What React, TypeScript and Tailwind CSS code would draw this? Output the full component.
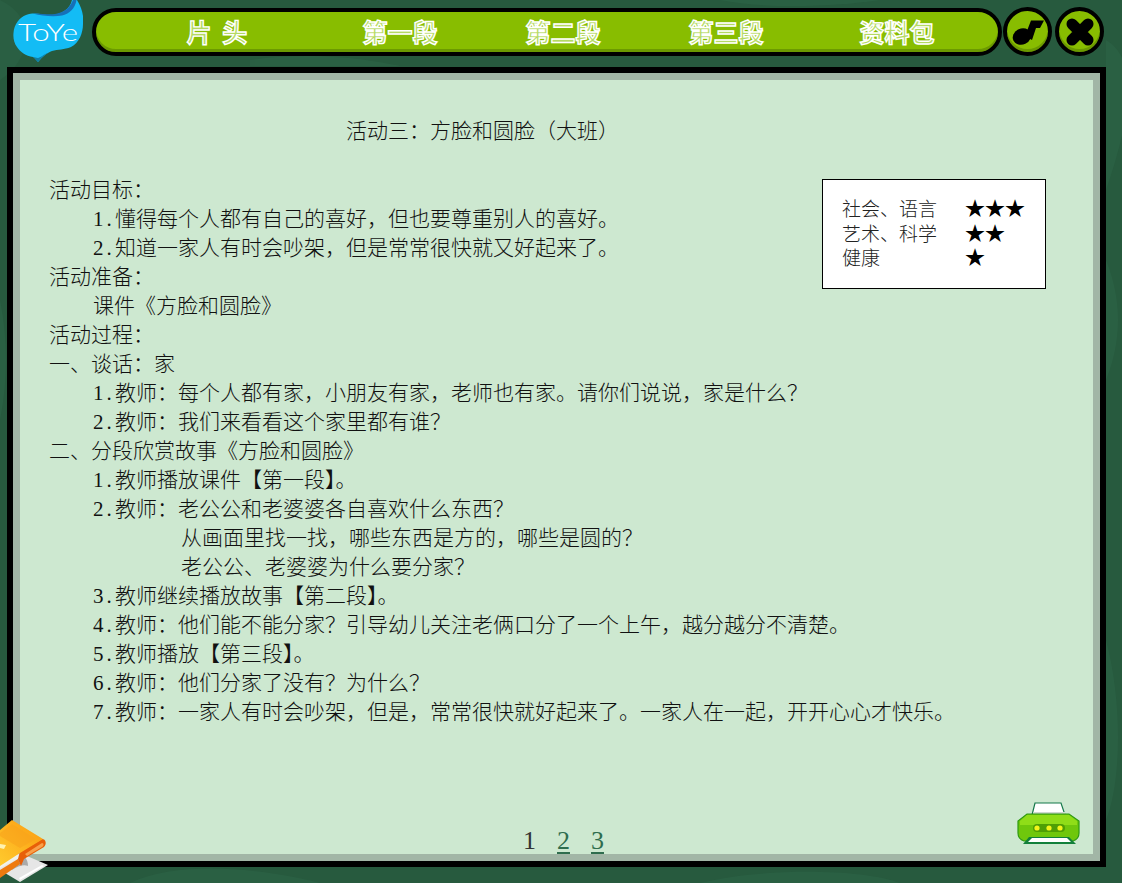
import React from "react";

const FONT = "[font-family:'Liberation_Serif','Noto_Sans_CJK_SC',serif]";

function Line({ n, indent = 0, children }: { n?: string; indent?: 0 | 1 | 2; children: React.ReactNode }) {
  const pad = indent === 0 ? "pl-0" : indent === 1 ? "pl-[44px]" : "pl-[132px]";
  return (
    <div className={`h-[29px] leading-[29px] whitespace-nowrap ${pad}`}>
      {n && <span className="inline-block w-[22px] tracking-[3px]">{n}</span>}
      {children}
    </div>
  );
}

function Logo() {
  return (
    <svg width="70" height="63" viewBox="13 0 70 63" className="shrink-0">
      <path d="M13.5 33 C14 24 20 17 26 15 C36 11 44 16 52 15 C62 14 70 9 72 0 L77 0 C82 8 84 16 83 24 C83 33 79 43 71 47 C64 50 58 49 52 51 C47 53 43 56 38 62 C36 60 35 58 33 57 C26 56 20 52 17 47 C14 43 13 38 13.5 33 Z" fill="#13bcf5" />
      <path d="M33 13.5 C40 13 48 15 55 14 C64 12.5 70 8 73 0 L76.5 0 C75 9 69 14 62 15.5 C54 17 42 16 33 13.5 Z" fill="#1670b8" />
      <path d="M33 57 C35 58 36 60 38 62 C41 58 44 55 48 53 C44 54 40 58 38 58 C36 58 35 57 33 57 Z" fill="#0e7fa8" />
      <text x="18" y="41" fill="#ffffff" fontSize="23" fontFamily="'Lato', sans-serif" fontWeight="300" textLength="60" lengthAdjust="spacingAndGlyphs">ToYe</text>
    </svg>
  );
}

function RoundButton({ children }: { children: React.ReactNode }) {
  return (
    <div className="flex h-[49px] w-[49px] shrink-0 items-center justify-center rounded-full border-[4px] border-black bg-[#88bd00] shadow-[inset_0_-3px_0_#6c9a00]">
      {children}
    </div>
  );
}

function NavItem({ label, className }: { label: string; className: string }) {
  return (
    <div className={`mb-[2px] w-40 text-center whitespace-pre font-bold text-[25px] leading-[40px] text-[#b4d962] [-webkit-text-stroke:1.4px_#ffffff] ${className}`}>
      {label}
    </div>
  );
}

function Book() {
  return (
    <svg width="50" height="65" viewBox="0 0 50 65" className="absolute left-0 top-[818px]">
      <defs>
        <linearGradient id="bk" x1="1" y1="0" x2="0" y2="1">
          <stop offset="0" stopColor="#fb9a10" />
          <stop offset="1" stopColor="#ffcb2e" />
        </linearGradient>
      </defs>
      <polygon points="20,35 48,47 20,64 0,52 0,45" fill="#e6e6e6" />
      <polygon points="19,60 42,47 44,48 20,62" fill="#ffffff" />
      <path d="M19 34 C25 38 28 42 28 48 C24 46 18 48 12 52 L10 50 C15 44 20 42 19 34 Z" fill="#a9a9a9" />
      <polygon points="0,38 15,31 19,40 0,50" fill="#f1f1ea" />
      <polygon points="0,41 6,39 6,41 0,43" fill="#e0702a" />
      <polygon points="0,52 18,41 20,46 0,60" fill="#ee7a10" />
      <path d="M20 34 L42 21 C46 21 47 26 44 29 L24 41 L21 48 L18 41 Z" fill="#e85f08" />
      <path d="M25 36 L42 25 C44 25 44 28 42 29 L27 38 Z" fill="#f9a04a" />
      <polygon points="0,12 12,2 43,21 20,35 0,48" fill="url(#bk)" />
      <polygon points="0,15 12,6 36,21 20,30 0,18" fill="#f7a21c" opacity="0.55" />
      <polygon points="0,26 6,27 4,31 0,30" fill="#fff2b0" />
    </svg>
  );
}

function Printer() {
  return (
    <svg width="64" height="44" viewBox="0 0 64 44" className="absolute bottom-[9px] right-[12px]">
      <path d="M10 14 L13 2 H39 L43 14 Z" fill="#ffffff" stroke="#15784a" strokeWidth="1.2" transform="translate(5 0)" />
      <rect x="16" y="11" width="32" height="3" fill="#cfd8cf" />
      <path d="M10 13 H52 L62 20 V32 Q62 38 56 40 H7 Q1 38 1 32 V20 Z" fill="#6fc70c" stroke="#2e9a12" strokeWidth="1.2" />
      <path d="M10 14 H52 L60 20 V24 H3 V20 Z" fill="#8fdd18" />
      <rect x="16" y="23" width="32" height="8" rx="4" fill="#4e9f05" />
      <circle cx="20" cy="27" r="2.6" fill="#f4f41a" />
      <circle cx="32" cy="27" r="2.6" fill="#f4f41a" />
      <circle cx="43" cy="27" r="2.6" fill="#f4f41a" />
      <polygon points="12,36 52,36 59,43 6,43" fill="#12803a" />
      <polygon points="15,37 50,37 54,41 11,41" fill="#ffffff" />
    </svg>
  );
}

function Background() {
  return (
    <svg width="1122" height="883" viewBox="0 0 1122 883" className="absolute inset-0">
      <g fill="#2c6246" opacity="0.7">
        <path d="M0 0 C40 20 30 60 0 80 Z" />
        <path d="M250 60 C320 50 380 62 400 66 L250 66 Z" />
        <path d="M1106 40 C1140 60 1130 120 1106 190 Z" />
        <path d="M1106 260 C1122 300 1122 340 1106 380 Z" />
        <path d="M1106 640 C1122 700 1122 780 1106 820 Z" />
        <path d="M130 883 C180 860 260 868 320 883 Z" />
        <path d="M700 883 C760 868 860 868 900 883 Z" />
        <path d="M0 300 C8 340 8 380 0 420 Z" />
        <path d="M720 0 C770 10 840 6 880 0 Z" />
      </g>
    </svg>
  );
}

export default function App() {
  return (
    <div className={`relative h-[883px] w-[1122px] overflow-hidden bg-[#275a3e] ${FONT}`}>
      <Background />
      <div className="relative flex h-[67px] items-start pl-[13px]">
        <Logo />
        <div className="ml-[9px] mt-[8px] flex h-[48px] w-[910px] shrink-0 items-center rounded-full border-[4px] border-black bg-[#88bd00] pl-[41px] shadow-[inset_0_-3px_0_#6c9a00] [font-family:'Noto_Sans_CJK_SC',sans-serif]">
          <NavItem label={"片 头"} className="[word-spacing:5px]" />
          <NavItem label="第一段" className="ml-[23px]" />
          <NavItem label="第二段" className="ml-[3px]" />
          <NavItem label="第三段" className="ml-[3px]" />
          <NavItem label="资料包" className="ml-[11px]" />
        </div>
        <div className="ml-[1px] mt-[7px] flex gap-[3px]">
          <RoundButton>
            <svg width="32" height="32" viewBox="0 0 32 32">
              <ellipse cx="10" cy="20.5" rx="9.5" ry="8" transform="rotate(-25 10 20.5)" fill="#000" />
              <path d="M13 20 L19 4.5 H32 L28 12 H24 L20 24 Z" fill="#000" />
            </svg>
          </RoundButton>
          <RoundButton>
            <svg width="32" height="32" viewBox="0 0 32 32">
              <path d="M8 8 L24 24 M24 8 L8 24" stroke="#000" strokeWidth="11" strokeLinecap="round" />
            </svg>
          </RoundButton>
        </div>
      </div>

      <div className="relative ml-[7px] h-[800px] w-[1099px] border-[6px] border-black bg-black">
        <div className="h-full border-[7px] border-[#a2b6a6]">
          <div className="relative flex h-full flex-col bg-[#cde8d0] pl-[29px] pt-[37px] text-[21px] font-light text-[#111111]">
            <div className="grow">
              <div className="h-[59px] pl-[297px] leading-[29px] whitespace-nowrap">活动三：方脸和圆脸（大班）</div>
              <div className="float-right mr-[47px] mt-[3px] h-[110px] w-[224px] border border-black bg-white pl-[19px] pt-[17px] text-[19px] leading-[24.5px] text-[#222222]">
                <div className="grid grid-cols-[123px_1fr]">
                  <div className="translate-y-[1px]">社会、语言</div>
                  <div className="text-[20px] text-black">★★★</div>
                  <div className="translate-y-[1px]">艺术、科学</div>
                  <div className="text-[20px] text-black">★★</div>
                  <div className="translate-y-[1px]">健康</div>
                  <div className="text-[20px] text-black">★</div>
                </div>
              </div>
              <Line>活动目标：</Line>
              <Line indent={1} n="1.">懂得每个人都有自己的喜好，但也要尊重别人的喜好。</Line>
              <Line indent={1} n="2.">知道一家人有时会吵架，但是常常很快就又好起来了。</Line>
              <Line>活动准备：</Line>
              <Line indent={1}>课件《方脸和圆脸》</Line>
              <Line>活动过程：</Line>
              <Line>一、谈话：家</Line>
              <Line indent={1} n="1.">教师：每个人都有家，小朋友有家，老师也有家。请你们说说，家是什么？</Line>
              <Line indent={1} n="2.">教师：我们来看看这个家里都有谁？</Line>
              <Line>二、分段欣赏故事《方脸和圆脸》</Line>
              <Line indent={1} n="1.">教师播放课件【第一段】。</Line>
              <Line indent={1} n="2.">教师：老公公和老婆婆各自喜欢什么东西？</Line>
              <Line indent={2}>从画面里找一找，哪些东西是方的，哪些是圆的？</Line>
              <Line indent={2}>老公公、老婆婆为什么要分家？</Line>
              <Line indent={1} n="3.">教师继续播放故事【第二段】。</Line>
              <Line indent={1} n="4.">教师：他们能不能分家？引导幼儿关注老俩口分了一个上午，越分越分不清楚。</Line>
              <Line indent={1} n="5.">教师播放【第三段】。</Line>
              <Line indent={1} n="6.">教师：他们分家了没有？为什么？</Line>
              <Line indent={1} n="7.">教师：一家人有时会吵架，但是，常常很快就好起来了。一家人在一起，开开心心才快乐。</Line>
            </div>
            <div className="mb-[-4px] ml-[474px] flex h-[31px] gap-[21px] text-[26px] leading-[28px] font-normal">
              <span className="text-[#333333]">1</span>
              <span className="text-[#2f6d4e] underline underline-offset-[3px]">2</span>
              <span className="text-[#2f6d4e] underline underline-offset-[3px]">3</span>
            </div>
            <Printer />
          </div>
        </div>
      </div>
      <Book />
    </div>
  );
}
